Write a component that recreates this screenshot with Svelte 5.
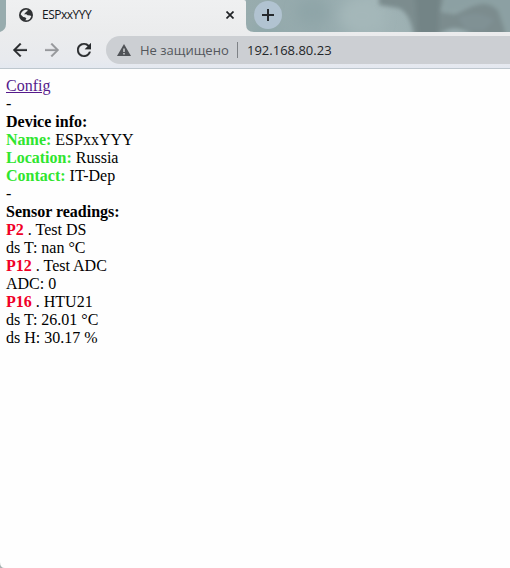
<script>
  const info = [
    ['Name:', 'ESPxxYYY'],
    ['Location:', 'Russia'],
    ['Contact:', 'IT-Dep']
  ];
  const sensors = [
    { pin: 'P2', title: 'Test DS', values: ['ds T: nan °C'] },
    { pin: 'P12', title: 'Test ADC', values: ['ADC: 0'] },
    { pin: 'P16', title: 'HTU21', values: ['ds T: 26.01 °C', 'ds H: 30.17 %'] }
  ];
</script>

<div class="window">
  <header class="strip">
    <svg class="wallpaper" width="510" height="32" viewBox="0 0 510 32" aria-hidden="true">
      <defs>
        <filter id="soft" x="-20%" y="-40%" width="140%" height="180%"><feGaussianBlur stdDeviation="2" /></filter>
        <filter id="wide" x="-20%" y="-60%" width="140%" height="220%"><feGaussianBlur stdDeviation="6" /></filter>
        <linearGradient id="base" x1="0" x2="1"><stop offset=".48" stop-color="#98acae" /><stop offset=".62" stop-color="#94a9ac" /><stop offset=".74" stop-color="#a1b4b6" /><stop offset="1" stop-color="#8fa3a6" /></linearGradient>
      </defs>
      <rect width="510" height="32" fill="url(#base)" />
      <g filter="url(#wide)">
        <ellipse cx="312" cy="12" rx="16" ry="12" fill="#8fa5a8" />
        <ellipse cx="362" cy="16" rx="22" ry="18" fill="#a4b7b9" />
        <ellipse cx="266" cy="30" rx="16" ry="6" fill="#8fa7aa" />
      </g>
      <g filter="url(#soft)">
        <path d="M379 -5H444L441 12L455 14L468 8Q484 0 495 6L505 20V36H474Q456 22 437 36H414Q410 12 398 8L379 5Z" fill="#7b8c8e" />
        <path d="M415 -5H440L438 36H418Z" fill="#738486" />
        <path d="M443 -5H515V34H506L498 10Q484 -2 468 7L455 12H443Z" fill="#8ca0a3" />
        <path d="M458 17Q478 10 494 20L484 30H466Z" fill="#809194" />
        <path d="M438 36Q454 21 472 36Z" fill="#9aadb0" />
      </g>
    </svg>
    <svg class="edge" width="6" height="32" viewBox="0 0 6 32" aria-hidden="true">
      <path d="M6 0V24Q6 30 0 32H6Z" fill="#ebeced" />
    </svg>
    <div class="tab">
      <svg class="globe" width="14" height="14" viewBox="0 0 14 14" aria-hidden="true">
        <circle cx="7" cy="7" r="7" fill="#303234" />
        <path d="M6.3 1.7H8.5V3L7 4L6 5.2L5 6.2H7.4L8.6 7.2L11.3 7.4L12.3 8.3Q11.6 11.2 8.8 12.2H6.3L7.4 10.6L6 9.2L4.2 9L1.7 6.6Q2.2 3 6.3 1.7Z" fill="#ecedee" />
      </svg>
      <span class="title">ESPxxYYY</span>
      <svg class="close" width="8" height="8" viewBox="0 0 8 8" aria-hidden="true"><path d="M.5.5L7.5 7.5M7.5.5L.5 7.5" stroke="#202326" stroke-width="1.7" /></svg>
    </div>
    <svg class="right" width="8" height="8" viewBox="0 0 8 8" aria-hidden="true"><path d="M0 0Q0 8 8 8H0Z" fill="#ebeced" /></svg>
    <div class="new">
      <svg width="12" height="12" viewBox="0 0 12 12" aria-hidden="true"><path d="M6 0V12M0 6H12" stroke="#25292d" stroke-width="2" /></svg>
    </div>
  </header>
  <nav class="toolbar">
    <svg width="14" height="14" viewBox="4 4 16 16" aria-hidden="true"><path d="M20 11H7.83l5.59-5.59L12 4l-8 8 8 8 1.41-1.41L7.83 13H20v-2z" fill="#292c2e" stroke="#292c2e" stroke-width=".3" /></svg>
    <svg width="14" height="14" viewBox="4 4 16 16" aria-hidden="true"><path d="M4 11h12.17l-5.59-5.59L12 4l8 8-8 8-1.41-1.41L16.17 13H4v-2z" fill="#96989b" stroke="#96989b" stroke-width=".3" /></svg>
    <svg width="14" height="14" viewBox="4 4 16 16" aria-hidden="true"><path d="M17.65 6.35C16.2 4.9 14.21 4 12 4c-4.42 0-7.99 3.58-7.99 8s3.57 8 7.99 8c3.73 0 6.84-2.55 7.73-6h-2.08c-.82 2.33-3.04 4-5.65 4-3.31 0-6-2.69-6-6s2.69-6 6-6c1.66 0 3.14.69 4.22 1.78L13 11h7V4l-2.35 2.35z" fill="#292c2e" stroke="#292c2e" stroke-width=".3" /></svg>
    <div class="address">
      <svg width="14" height="12" viewBox="0 0 14 12" aria-hidden="true"><path d="M7 0L14 12H0Z" fill="#505357" /><path d="M6.3 4.5H7.7V8H6.3ZM6.3 9H7.7V10.4H6.3Z" fill="#d8dadc" /></svg>
      <span class="warning">Не защищено</span>
      <span class="divider"></span>
      <span class="url">192.168.80.23</span>
    </div>
  </nav>
  <main>
    <a href="#config">Config</a>
    <div>-</div>
    <div><b>Device info:</b></div>
    {#each info as [label, value]}
      <div><b class="green">{label}</b> {value}</div>
    {/each}
    <div>-</div>
    <div><b>Sensor readings:</b></div>
    {#each sensors as sensor}
      <div><b class="red">{sensor.pin}</b> . {sensor.title}</div>
      {#each sensor.values as value}<div>{value}</div>{/each}
    {/each}
  </main>
  <svg class="corner" width="5" height="6" viewBox="0 0 5 6" aria-hidden="true"><path d="M0 0Q0 6 5 6H0Z" fill="#a9b2b2" /></svg>
</div>

<style>
  :global(body) { overflow: hidden; }
  .window { position: relative; width: 510px; height: 568px; background: #fefefe; display: flex; flex-direction: column; overflow: hidden; }
  svg { display: block; flex: none; }
  .strip { position: relative; height: 32px; flex: none; display: flex; align-items: flex-start; }
  .wallpaper { position: absolute; inset: 0; }
  .edge { position: relative; }
  .tab { position: relative; width: 240px; height: 32px; box-sizing: border-box; padding: 0 12px 2px 13px; display: flex; align-items: center; background: linear-gradient(#eff0f1, #ebeced); border-radius: 0 2px 0 0; }
  .title { margin-left: 9px; font: 12px/16px "Open Sans", "Noto Sans", sans-serif; color: #15171b; letter-spacing: -0.5px; white-space: nowrap; }
  .close { margin-left: auto; }
  .right { position: relative; align-self: flex-end; }
  .new { position: relative; width: 28px; height: 28px; margin-top: 1px; border-radius: 50%; background: #b1c3d1; display: flex; align-items: center; justify-content: center; }
  .toolbar { height: 37px; flex: none; box-sizing: border-box; border-bottom: 1px solid #bec7ce; background: linear-gradient(#ebeced, #e8eaee 75%, #e4e8f0); display: flex; align-items: center; gap: 18px; padding-left: 13px; }
  .address { margin-left: -3px; width: 430px; height: 28px; flex: none; box-sizing: border-box; padding-left: 11px; border-radius: 14px 0 0 14px; background: #cccfd3; display: flex; align-items: center; font: 13px/20px "Open Sans", "Noto Sans", sans-serif; white-space: nowrap; }
  .warning { margin-left: 9px; width: 90px; color: #53575c; }
  .divider { width: 1px; height: 16px; margin-left: 7px; background: #7e8286; }
  .url { margin-left: 9px; color: #232629; }
  main { padding: 8px 6px; font: 16px/18px "Liberation Serif", "Times New Roman", serif; color: #000; }
  a { display: block; width: max-content; color: #551a8b; }
  .green { color: #2fe52f; }
  .red { color: #f00028; }
  .corner { position: absolute; left: 0; bottom: 0; }
</style>
